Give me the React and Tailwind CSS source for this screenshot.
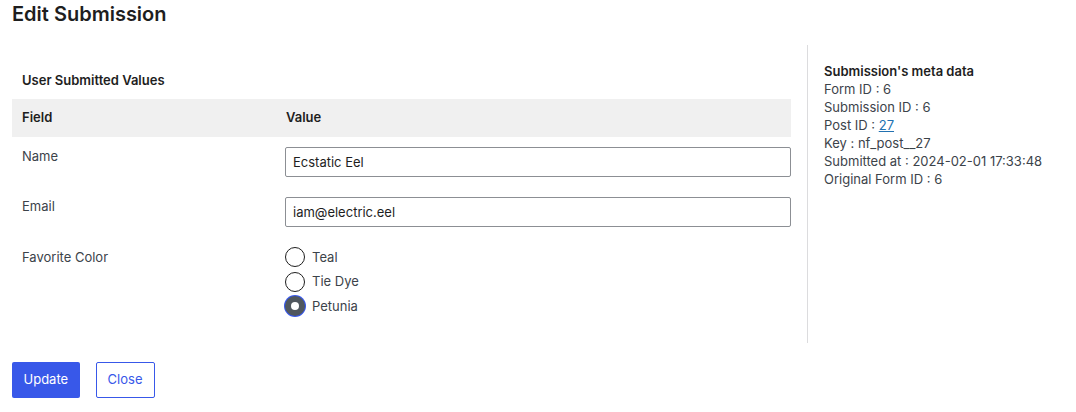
import { useState } from 'react'

const font = { fontFamily: 'Inter, "Liberation Sans", sans-serif' }

function Radio({ label, checked, onChange }) {
  return (
    <label className="flex items-center h-[24.5px] gap-[7px] cursor-pointer" onClick={onChange}>
      {checked ? (
        <span className="w-[20px] h-[20px] rounded-full bg-[#50575e] ring-1 ring-[#3858e9] flex items-center justify-center">
          <span className="w-[8px] h-[8px] rounded-full bg-white" />
        </span>
      ) : (
        <span className="w-[20px] h-[20px] rounded-full border border-[#1e1e1e] bg-white" />
      )}
      <span>{label}</span>
    </label>
  )
}

export default function App() {
  const [color, setColor] = useState('Petunia')
  const meta = [
    ['Form ID', '6'],
    ['Submission ID', '6'],
    ['Post ID', '27', true],
    ['Key', 'nf_post__27'],
    ['Submitted at', '2024-02-01 17:33:48'],
    ['Original Form ID', '6'],
  ]

  return (
    <div className="w-[1076px] h-[412px] bg-white px-3 text-[13px] text-[#3c434a]" style={font}>
      <h1 className="text-[20px] leading-[28px] font-semibold text-[#1e1e1e] pt-0">Edit Submission</h1>

      <div className="flex mt-[17px]">
        {/* Left: values */}
        <div className="w-[779px] pt-[26px] pb-[24px]">
          <h2 className="font-semibold text-[#1e1e1e] leading-[18px] mb-[10px] px-[10px]">User Submitted Values</h2>
          <div className="grid grid-cols-[264px_1fr]">
            <div className="bg-[#f0f0f0] h-[38px] flex items-center px-[10px] font-semibold text-[#1e1e1e]">Field</div>
            <div className="bg-[#f0f0f0] h-[38px] flex items-center px-[10px] font-semibold text-[#1e1e1e]">Value</div>

            <div className="px-[10px] pt-[10px] leading-[18px]">Name</div>
            <div className="pl-[9px] py-[10px]">
              <input
                defaultValue="Ecstatic Eel"
                className="w-full h-[30px] border border-[#8c8f94] rounded-[2px] px-[7px] text-[13px] text-[#1e1e1e] outline-none"
              />
            </div>

            <div className="px-[10px] pt-[10px] leading-[18px]">Email</div>
            <div className="pl-[9px] py-[10px]">
              <input
                defaultValue="iam@electric.eel"
                className="w-full h-[30px] border border-[#8c8f94] rounded-[2px] px-[7px] text-[13px] text-[#1e1e1e] outline-none"
              />
            </div>

            <div className="px-[10px] pt-[11px] leading-[18px]">Favorite Color</div>
            <div className="pl-[9px] pt-[8px]">
              {['Teal', 'Tie Dye', 'Petunia'].map((c) => (
                <Radio key={c} label={c} checked={color === c} onChange={() => setColor(c)} />
              ))}
            </div>
          </div>
        </div>

        {/* Right: meta */}
        <div className="ml-[16px] border-l border-[#dcdcde] pl-[16px] pt-[17px] leading-[18px]">
          <div className="font-semibold text-[#1e1e1e]">Submission's meta data</div>
          {meta.map(([k, v, link]) => (
            <div key={k}>
              {k} :{' '}
              {link ? <a href="#" className="text-[#2271b1] underline">{v}</a> : v}
            </div>
          ))}
        </div>
      </div>

      <div className="flex gap-4 mt-[19px]">
        <button className="h-[36px] px-[11.5px] bg-[#3858e9] text-white rounded-[2px] text-[13px]">Update</button>
        <button className="h-[36px] px-[11px] border border-[#3858e9] text-[#3858e9] rounded-[2px] text-[13px] bg-white">Close</button>
      </div>
    </div>
  )
}
